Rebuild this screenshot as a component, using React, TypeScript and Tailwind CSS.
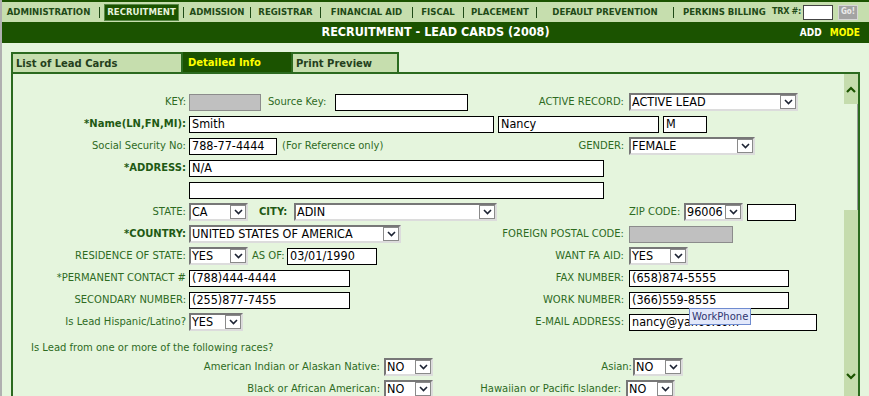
import React from "react";

const F = "font-['DejaVu_Sans',sans-serif]";
const FC = "font-['DejaVu_Sans_Condensed',sans-serif]";
const LBL = `${F} text-[10px] leading-[14px] text-[#2e6b1f] whitespace-nowrap`;
const LBLB = `${F} text-[10px] leading-[14px] font-bold text-[#1f5a14] whitespace-nowrap`;

function Down() {
  return (
    <svg width="9" height="6" viewBox="0 0 9 6">
      <polyline points="1,1 4.5,4.5 8,1" fill="none" stroke="#1c2333" strokeWidth="1.6" />
    </svg>
  );
}

function Sel({ w, v }: { w: string; v: string }) {
  return (
    <div
      className={`${w} h-[18px] shrink-0 flex items-center bg-white border-2 border-t-[#777777] border-l-[#777777] border-b-[#dcdcdc] border-r-[#dcdcdc]`}
    >
      <span className={`flex-1 pl-[1px] text-[12.5px] leading-[14px] text-black ${FC} whitespace-nowrap`}>{v}</span>
      <span className="w-[16px] h-[14px] border border-[#8a8a8a] bg-white flex items-center justify-center shrink-0">
        <Down />
      </span>
    </div>
  );
}

function Inp({ w, v = "" }: { w: string; v?: string }) {
  return (
    <div
      className={`${w} h-[17px] shrink-0 flex items-center bg-white border border-black pl-[2px] text-[12.5px] leading-[14px] text-black ${FC} whitespace-nowrap`}
    >
      {v}
    </div>
  );
}

function Gray({ w }: { w: string }) {
  return <div className={`${w} h-[17px] shrink-0 bg-[#c0c0c0] border border-[#8c8c8c]`} />;
}

function Row({
  label,
  bold,
  left,
  rlabel,
  right,
}: {
  label?: string;
  bold?: boolean;
  left?: React.ReactNode;
  rlabel?: string;
  right?: React.ReactNode;
}) {
  return (
    <div className="flex items-center h-[22px]">
      <div className="w-[487px] shrink-0 flex items-center">
        <div className={`w-[173px] shrink-0 text-right ${bold ? LBLB : LBL}`}>{label}</div>
        <div className="ml-[3px] flex items-center">{left}</div>
      </div>
      <div className={`w-[124px] shrink-0 text-right ${LBL}`}>{rlabel}</div>
      <div className="ml-[5px] flex items-center">{right}</div>
    </div>
  );
}

function Chev({ up }: { up?: boolean }) {
  return (
    <svg width="10" height="7" viewBox="0 0 10 7">
      <polyline
        points={up ? "1,6 5,2 9,6" : "1,1 5,5 9,1"}
        fill="none"
        stroke="#1b5300"
        strokeWidth="2.2"
      />
    </svg>
  );
}

const NAV = `${FC} text-[9.5px] font-bold text-[#1f4a17] whitespace-nowrap`;

function Sep() {
  return <div className="w-px h-[11px] bg-[#1f4a17] shrink-0" />;
}

function Cell({ w, t }: { w: string; t: string }) {
  return <div className={`${w} shrink-0 flex justify-center ${NAV}`}>{t}</div>;
}

export default function App() {
  return (
    <div className="w-[869px] h-[396px] overflow-hidden bg-[#e5f5dd] border-l-2 border-[#b0b0b0]">
      {/* top nav */}
      <div className="h-[22px] border-t-2 border-[#1b5300] bg-[#c6deae] flex items-center">
        <Cell w="w-[93px]" t="ADMINISTRATION" />
        <div className="w-[4px] shrink-0" />
        <Sep />
        <div className="w-[83px] shrink-0 flex justify-center">
          <div className={`w-[75px] h-[17px] flex items-center justify-center border border-[#5a8a48] bg-[#1b5300] ${FC} text-[9.5px] font-bold text-[#e6f2dc]`}>
            RECRUITMENT
          </div>
        </div>
        <Sep />
        <Cell w="w-[66px]" t="ADMISSION" />
        <Sep />
        <Cell w="w-[69px]" t="REGISTRAR" />
        <Sep />
        <Cell w="w-[91px]" t="FINANCIAL AID" />
        <Sep />
        <Cell w="w-[50px]" t="FISCAL" />
        <Sep />
        <Cell w="w-[72px]" t="PLACEMENT" />
        <Sep />
        <Cell w="w-[136px]" t="DEFAULT PREVENTION" />
        <Sep />
        <div className={`w-[98px] shrink-0 pl-[9px] ${NAV}`}>PERKINS BILLING</div>
        <div className={`w-[31px] shrink-0 ${FC} text-[9px] tracking-[-0.3px] font-bold text-[#1f4a17] whitespace-nowrap`}>TRX #:</div>
        <div className="w-[30px] h-[15px] shrink-0 bg-white border border-[#444444]" />
        <div className={`ml-[5px] w-[20px] h-[15px] shrink-0 bg-[#a3a3a3] border border-[#d6d6d6] flex items-center justify-center ${FC} text-[8px] font-bold text-[#ececec]`}>
          Go!
        </div>
      </div>

      {/* title bar */}
      <div className="h-[21px] bg-[#1b5300] grid grid-cols-[1fr_auto_1fr] items-center">
        <div />
        <div className={`${FC} text-[12.5px] font-bold text-white whitespace-nowrap`}>RECRUITMENT - LEAD CARDS (2008)</div>
        <div className={`flex justify-end gap-[8px] pr-[9px] ${FC} text-[10px] font-bold`}>
          <span className="text-white">ADD</span>
          <span className="text-[#ffff00]">MODE</span>
        </div>
      </div>

      {/* tabs */}
      <div className="ml-[9px] mt-[9px] flex h-[20px]">
        <div className={`w-[172px] h-[20px] border-2 border-b-0 border-[#2b6a1f] bg-[#c6deae] pl-[3px] flex items-center ${F} text-[10px] font-bold text-[#243f1c]`}>
          List of Lead Cards
        </div>
        <div className={`w-[108px] h-[20px] bg-[#1b5300] pl-[5px] flex items-center ${F} text-[10px] font-bold text-[#ffff00]`}>
          Detailed Info
        </div>
        <div className={`w-[108px] h-[20px] border-2 border-b-0 border-[#2b6a1f] bg-[#c6deae] pl-[3px] flex items-center ${F} text-[10px] font-bold text-[#243f1c]`}>
          Print Preview
        </div>
      </div>

      {/* panel */}
      <div className="ml-[9px] w-[849px] border-2 border-[#2b6a1f] relative flex">
        <div className="flex-1 pt-[17px]">
          <Row
            label="KEY:"
            left={
              <>
                <Gray w="w-[72px]" />
                <span className={`ml-[7px] w-[63px] ${LBL}`}>Source Key:</span>
                <div className="ml-[4px]">
                  <Inp w="w-[133px]" />
                </div>
              </>
            }
            rlabel="ACTIVE RECORD:"
            right={<Sel w="w-[169px]" v="ACTIVE LEAD" />}
          />
          <div className="flex items-center h-[22px]">
            <div className={`w-[173px] shrink-0 text-right ${LBLB}`}>*Name(LN,FN,MI):</div>
            <div className="ml-[3px] flex items-center gap-[4px]">
              <Inp w="w-[305px]" v="Smith" />
              <Inp w="w-[161px]" v="Nancy" />
              <Inp w="w-[44px]" v="M" />
            </div>
          </div>
          <Row
            label="Social Security No:"
            left={
              <>
                <Inp w="w-[88px]" v="788-77-4444" />
                <span className={`ml-[5px] ${LBL}`}>(For Reference only)</span>
              </>
            }
            rlabel="GENDER:"
            right={<Sel w="w-[126px]" v="FEMALE" />}
          />
          <Row label="*ADDRESS:" bold left={<Inp w="w-[415px]" v="N/A" />} />
          <Row left={<Inp w="w-[415px]" />} />
          <Row
            label="STATE:"
            left={
              <>
                <Sel w="w-[59px]" v="CA" />
                <span className={`ml-[11px] w-[30px] ${LBLB}`}>CITY:</span>
                <div className="ml-[5px]">
                  <Sel w="w-[203px]" v="ADIN" />
                </div>
              </>
            }
            right={
              <>
                <span className={`w-[53px] ${LBL}`}>ZIP CODE:</span>
                <div className="ml-[2px]">
                  <Sel w="w-[59px]" v="96006" />
                </div>
                <div className="ml-[4px]">
                  <Inp w="w-[49px]" />
                </div>
              </>
            }
          />
          <Row
            label="*COUNTRY:"
            bold
            left={<Sel w="w-[212px]" v="UNITED STATES OF AMERICA" />}
            rlabel="FOREIGN POSTAL CODE:"
            right={<Gray w="w-[104px]" />}
          />
          <Row
            label="RESIDENCE OF STATE:"
            left={
              <>
                <Sel w="w-[59px]" v="YES" />
                <span className={`ml-[4px] w-[35px] ${LBL}`}>AS OF:</span>
                <Inp w="w-[90px]" v="03/01/1990" />
              </>
            }
            rlabel="WANT FA AID:"
            right={<Sel w="w-[59px]" v="YES" />}
          />
          <Row
            label="*PERMANENT CONTACT #"
            left={<Inp w="w-[161px]" v="(788)444-4444" />}
            rlabel="FAX NUMBER:"
            right={<Inp w="w-[160px]" v="(658)874-5555" />}
          />
          <Row
            label="SECONDARY NUMBER:"
            left={<Inp w="w-[161px]" v="(255)877-7455" />}
            rlabel="WORK NUMBER:"
            right={<Inp w="w-[160px]" v="(366)559-8555" />}
          />
          <Row
            label="Is Lead Hispanic/Latino?"
            left={<Sel w="w-[54px]" v="YES" />}
            rlabel="E-MAIL ADDRESS:"
            right={<Inp w="w-[188px]" v="nancy@yahoo.com" />}
          />
          <div className={`mt-[8px] pl-[18px] h-[14px] flex items-center ${LBL}`}>
            Is Lead from one or more of the following races?
          </div>
          <div className="flex items-center h-[22px] mt-[1px]">
            <div className={`w-[367px] shrink-0 text-right ${LBL}`}>American Indian or Alaskan Native:</div>
            <div className="ml-[4px]">
              <Sel w="w-[49px]" v="NO" />
            </div>
            <div className={`w-[199px] shrink-0 text-right ${LBL}`}>Asian:</div>
            <div className="ml-[1px]">
              <Sel w="w-[50px]" v="NO" />
            </div>
          </div>
          <div className="flex items-center h-[22px]">
            <div className={`w-[367px] shrink-0 text-right ${LBL}`}>Black or African American:</div>
            <div className="ml-[4px]">
              <Sel w="w-[49px]" v="NO" />
            </div>
            <div className={`w-[188px] shrink-0 text-right ${LBL}`}>Hawaiian or Pacific Islander:</div>
            <div className="ml-[5px]">
              <Sel w="w-[49px]" v="NO" />
            </div>
          </div>
        </div>

        {/* scrollbar */}
        <div className="w-[14px] shrink-0 flex flex-col">
          <div className="h-[30px] bg-[#c5dcad] flex justify-center pt-[12px]">
            <Chev up />
          </div>
          <div className="h-[106px] border-r border-[#9a9a9a]" />
          <div className="h-[186px] bg-[#c5dcad] flex justify-center pt-[163px]">
            <Chev />
          </div>
        </div>

        {/* tooltip */}
        <div
          className={`absolute left-[676px] top-[234px] h-[17px] px-[2px] flex items-center bg-[#e2e8fb] border border-[#6f8bcf] ${F} text-[10px] text-[#2f3470] whitespace-nowrap`}
        >
          WorkPhone
        </div>
      </div>
    </div>
  );
}
